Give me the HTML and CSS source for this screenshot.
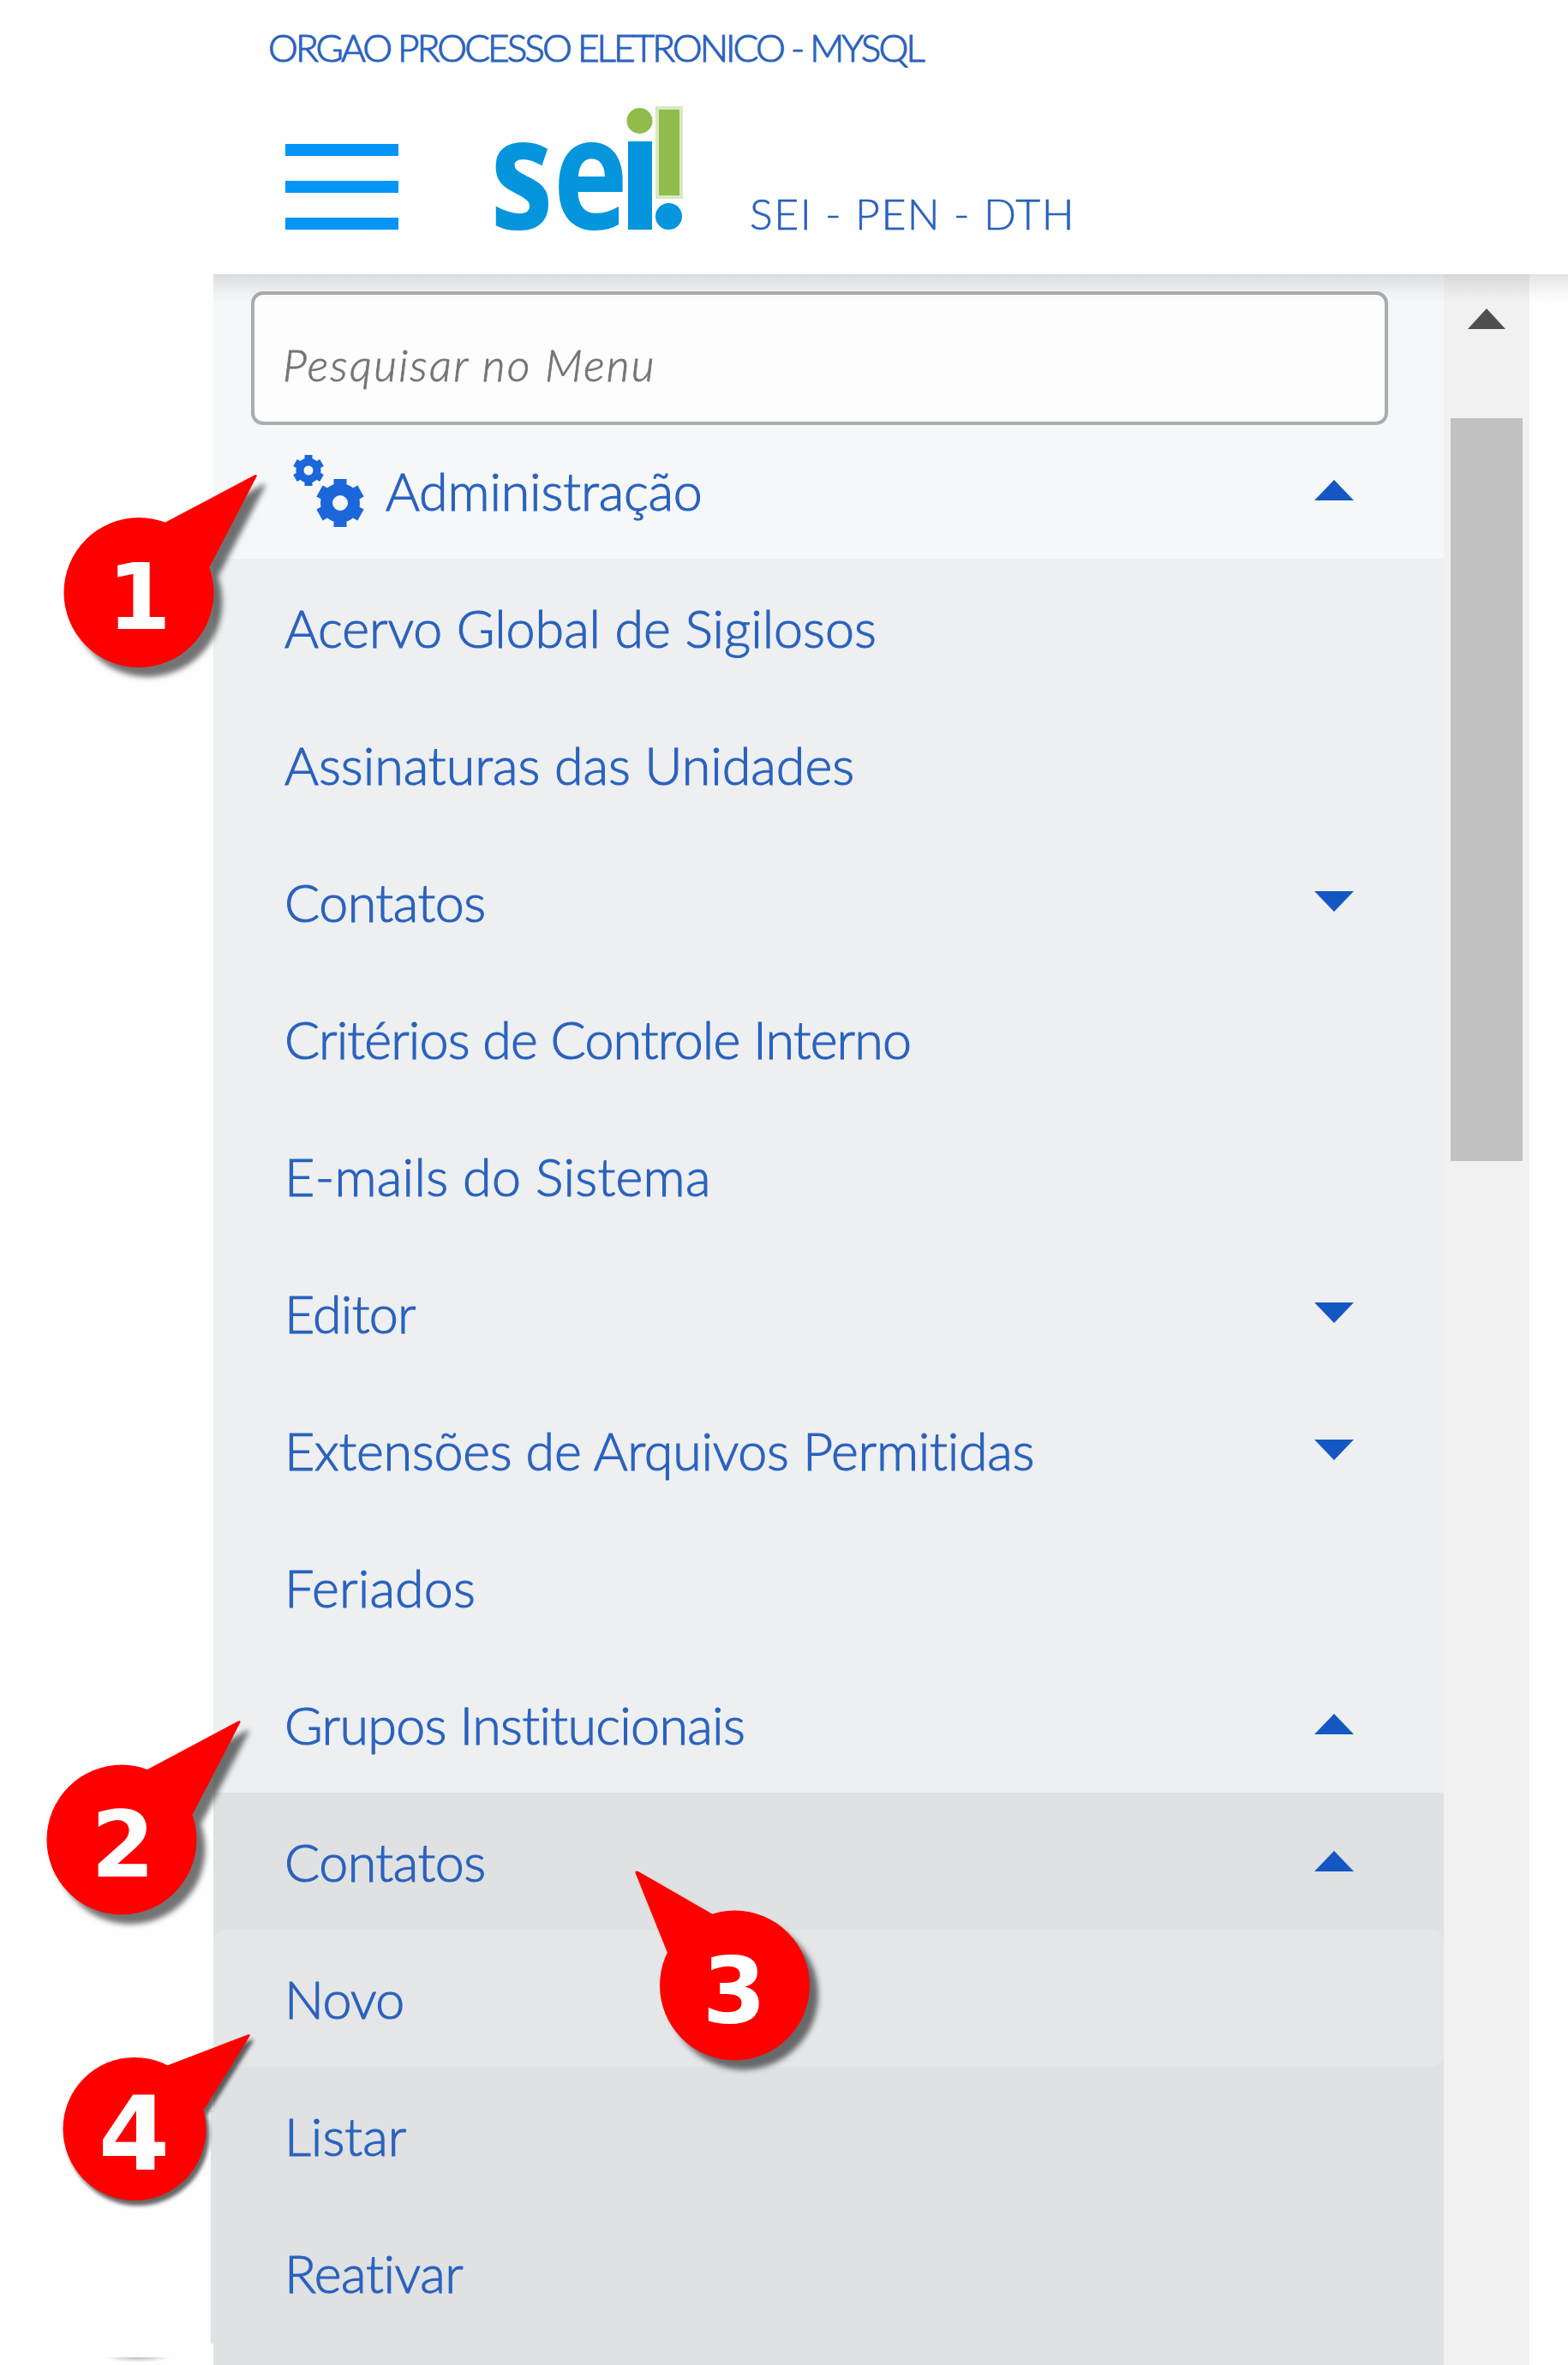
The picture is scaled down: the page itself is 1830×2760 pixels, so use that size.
FILE: index.html
```html
<!DOCTYPE html>
<html lang="pt-BR">
<head>
<meta charset="utf-8">
<title>SEI - Menu</title>
<link rel="stylesheet" href="styles.css">
</head>
<body>
<div class="page">
  <header class="header">
    <div class="agency">ORGAO PROCESSO ELETRONICO - MYSQL</div>
    <div class="brand">
      <div class="burger"><i></i><i></i><i></i></div>
      <svg class="logo" width="232" height="160" viewBox="570 120 232 160">
        <text class="logo-text" x="572" y="267" textLength="161" lengthAdjust="spacingAndGlyphs">se</text>
        <rect x="733" y="165" width="28" height="103" fill="#0495dc"/>
        <circle cx="746.500" cy="141" r="15" fill="#8fbc4b"/>
        <rect x="765" y="124" width="32" height="108" fill="#d8e8c0"/>
        <rect x="769" y="128" width="24" height="100" fill="#8fbc4b"/>
        <circle cx="780.500" cy="252.500" r="15.500" fill="#0495dc"/>
      </svg>
      <div class="system">SEI - PEN - DTH</div>
    </div>
  </header>
  <div class="body">
    <nav class="menu">
      <div class="search"><input type="text" placeholder="Pesquisar no Menu"></div>
      <div class="item root">
        <svg class="gears" width="88" height="88" viewBox="0 0 88 88" fill="#1b66d9" stroke="#1b66d9">
          <g transform="translate(19 18)">
            <circle r="10" fill="none" stroke-width="9"/>
            <path d="M0-18V-11M0 18V11M-15.500-9L-9.500-5.500M15.500-9L9.500-5.500M-15.500 9L-9.500 5.500M15.500 9L9.500 5.500" stroke-width="9"/>
          </g>
          <g transform="translate(56 56)">
            <circle r="16" fill="none" stroke-width="14"/>
            <path d="M0-28V-18M0 28V18M-24-14L-15-9M24-14L15-9M-24 14L-15 9M24 14L15 9" stroke-width="15"/>
          </g>
        </svg>
        <span class="t-administracao">Administração</span><b class="caret up"></b>
      </div>
      <div class="level1">
        <div class="item"><span>Acervo Global de Sigilosos</span></div>
        <div class="item"><span>Assinaturas das Unidades</span></div>
        <div class="item"><span class="t-contatos">Contatos</span><b class="caret down"></b></div>
        <div class="item"><span class="t-criterios">Critérios de Controle Interno</span></div>
        <div class="item"><span class="t-emails">E-mails do Sistema</span></div>
        <div class="item"><span class="t-editor">Editor</span><b class="caret down"></b></div>
        <div class="item"><span class="t-extensoes">Extensões de Arquivos Permitidas</span><b class="caret down"></b></div>
        <div class="item"><span class="t-feriados">Feriados</span></div>
        <div class="item"><span class="t-grupos">Grupos Institucionais</span><b class="caret up"></b></div>
      </div>
      <div class="level2">
        <div class="item"><span class="t-contatos">Contatos</span><b class="caret up"></b></div>
        <div class="item current"><span class="t-novo">Novo</span></div>
        <div class="item"><span class="t-listar">Listar</span></div>
        <div class="item"><span class="t-reativar">Reativar</span></div>
      </div>
    </nav>
    <div class="scrollbar"><b class="arrow"></b><i class="thumb"></i></div>
    <div class="header-shadow"></div>
  </div>

  <svg class="callout c1" width="300" height="260" viewBox="40 540 300 260">
    <g class="far"><circle cx="162" cy="691.500" r="87.500"/><path d="M192 610L297 554.500Q301 553 299 557L245 661L180 690Z"/></g>
    <text x="162.500" y="734">1</text>
  </svg>
  <svg class="callout c2" width="300" height="260" viewBox="20 1995 300 260">
    <g class="far"><circle cx="142" cy="2147" r="87.500"/><path d="M172 2065L277 2009Q282 2007 280 2011L225 2117L160 2145Z"/></g>
    <text x="143.500" y="2190">2</text>
  </svg>
  <svg class="callout c3" width="260" height="260" viewBox="725 2165 260 260">
    <g class="far"><circle cx="857.500" cy="2317" r="87.500"/><path d="M831 2233.500L745 2184Q740 2182 742 2187L779 2279L850 2310Z"/></g>
    <text x="857" y="2360">3</text>
  </svg>
  <svg class="callout c4" width="280" height="240" viewBox="50 2360 280 240">
    <g class="near"><circle cx="157" cy="2484.500" r="83.500"/><path d="M195 2410.500L289 2374.500Q293 2373 291 2377L238 2462L170 2480Z"/></g>
    <text class="large" x="156.500" y="2532">4</text>
  </svg>
  <i class="smudge"></i>
</div>
</body>
</html>
```
FILE: styles.css
```css
* { box-sizing: border-box; }
body { margin: 0; background: #fefefe; }
.page {
  position: relative;
  width: 1830px;
  height: 2760px;
  overflow: hidden;
  display: flex;
  flex-direction: column;
  font-family: Lato, "Open Sans", sans-serif;
  font-weight: 300;
  font-variant-ligatures: none;
  color: #2a62bd;
  -webkit-text-stroke: 1.1px currentColor;
  white-space: nowrap;
}

/* Header */
.header { height: 320px; flex: none; padding: 33px 0 0 313px; }
.agency { font-size: 44px; line-height: 44px; letter-spacing: -2.9px; }
.brand { display: flex; margin-top: 43px; padding-left: 20px; height: 160px; }
.burger { width: 132px; padding-top: 48px; display: flex; flex-direction: column; gap: 29px; flex: none; }
.burger i { height: 14px; background: #0495f7; }
.logo { margin-left: 105px; flex: none; overflow: visible; }
.logo-text {
  font-family: "Open Sans", "Noto Sans", sans-serif;
  font-weight: 700;
  font-size: 182px;
  fill: #0495dc;
  -webkit-text-stroke: 7px #0495dc;
}
.system { margin: 104px 0 0 73px; font-size: 50px; line-height: 50px; letter-spacing: 1.44px; -webkit-text-stroke-width: .6px; }

/* Menu */
.body { position: relative; display: flex; flex: 1; min-height: 0; padding-left: 249px; }
.menu { width: 1436px; background: #f5f7f9; flex: none; }
.search { height: 172px; padding: 20px 65px 0 44px; }
.search input {
  width: 100%;
  height: 156px;
  padding: 13px 33px 0;
  border: 4px solid #a8adb0;
  border-radius: 14px;
  background: #fdfdfd;
  font: italic 300 52px Lato, "Open Sans", sans-serif;
  letter-spacing: 2.2px;
  -webkit-text-stroke: .8px #757575;
}
.search input::placeholder { color: #757575; opacity: 1; }
.item {
  height: 160px;
  padding: 0 104px 0 83px;
  display: flex;
  align-items: center;
  font-size: 61px;
  line-height: 160px;
}
.item span { padding-top: 2px; letter-spacing: -.05px; }
.root { padding-left: 92px; }
.gears { margin: 6px 21px 0 0; flex: none; }
.level1 { background: #edeff1; }
.level2 { position: relative; background: #dfe1e3; height: 668px; }
.level2::before {
  content: "";
  position: absolute;
  left: -3px;
  top: 371px;
  width: 3px;
  height: 272px;
  background: #dfe1e3;
}
.current { background: #e5e6e8; border-radius: 14px; }
.item .t-administracao { letter-spacing: -.2px; }
.item .t-contatos { letter-spacing: -.5px; }
.item .t-criterios { letter-spacing: -.9px; }
.item .t-emails { letter-spacing: .25px; }
.item .t-editor { letter-spacing: -.8px; }
.item .t-extensoes { letter-spacing: -.28px; }
.item .t-feriados { letter-spacing: .15px; }
.item .t-grupos { letter-spacing: -.72px; }
.item .t-novo { letter-spacing: -.7px; }
.item .t-listar { letter-spacing: 0; }
.item .t-reativar { letter-spacing: -.4px; }
.caret { width: 46px; height: 24px; margin-left: auto; margin-right: 1px; background: #1557c2; }
.up { clip-path: polygon(50% 0, 100% 100%, 0 100%); }
.down { clip-path: polygon(0 0, 100% 0, 50% 100%); }

/* Scrollbar */
.scrollbar { width: 100px; background: #f1f1f1; display: flex; flex-direction: column; align-items: center; flex: none; }
.arrow { width: 44px; height: 24px; margin-top: 40px; background: #505050; clip-path: polygon(50% 0, 100% 100%, 0 100%); }
.thumb { width: 84px; height: 867px; margin-top: 104px; background: #c1c1c1; }
.header-shadow {
  position: absolute;
  left: 249px;
  right: 0;
  top: 0;
  height: 32px;
  background: linear-gradient(rgba(0, 0, 0, .11), rgba(0, 0, 0, .05) 45%, transparent);
}

/* Numbered callouts */
.callout { position: absolute; fill: #f00; }
.callout text {
  fill: #fff;
  font: bold 107px "DejaVu Sans", sans-serif;
  text-anchor: middle;
  -webkit-text-stroke: 0;
}
.callout text.large { font-size: 120px; }
.far { filter: drop-shadow(10px 11px 3px rgba(0, 0, 0, .55)); }
.near { filter: drop-shadow(4px 6px 2px rgba(0, 0, 0, .6)); }
.c1 { left: 40px; top: 540px; }
.c2 { left: 20px; top: 1995px; }
.c3 { left: 725px; top: 2165px; }
.c4 { left: 50px; top: 2360px; }
.smudge {
  position: absolute;
  left: 122px;
  top: 2751px;
  width: 78px;
  height: 6px;
  background: radial-gradient(ellipse at 50% 0, #bbb, transparent 70%);
}
```
